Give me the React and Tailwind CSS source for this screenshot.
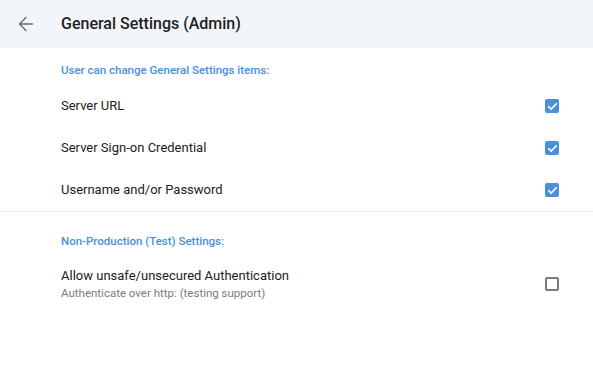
import { ArrowLeft } from "lucide-react";

function Check({ checked }) {
    if (checked) {
        return (
            <div className="w-[14px] h-[14px] rounded-[2px] bg-[#4a8fdc] flex items-center justify-center">
                <svg width="11" height="11" viewBox="0 0 24 24" fill="none" stroke="white" strokeWidth="3.5" strokeLinecap="square">
                    <path d="M4 12.5l5 5L20 6.5" />
                </svg>
            </div>
        );
    }
    return <div className="w-[14px] h-[14px] rounded-[2px] border-2 border-[#7a7a7a]" />;
}

function Row({ label, sub, checked }) {
    return (
        <div className={`flex items-center justify-between pl-[61px] pr-[34px] ${sub ? "pt-[18px]" : "h-[42px]"}`}>
            <div>
                <div className="text-[13px] leading-[18px] text-[#212121]">{label}</div>
                {sub && <div className="text-[11.5px] leading-[16px] text-[#7c7c7c]">{sub}</div>}
            </div>
            <Check checked={checked} />
        </div>
    );
}

export default function App() {
    return (
        <div className="w-[593px] h-[383px] bg-white font-['Roboto',sans-serif]">
            {/* Header */}
            <div className="h-12 bg-[#f2f6fa] flex items-center">
                <div className="w-[61px] pl-[15px]">
                    <ArrowLeft size={22} strokeWidth={1.5} color="#6b6b6b" />
                </div>
                <div className="text-[16px] font-medium text-[#212121]">General Settings (Admin)</div>
            </div>

            <div className="pt-[14px] pl-[61px] text-[11.5px] leading-[16px] font-medium text-[#4a8fdc]">
                User can change General Settings items:
            </div>
            <div className="pt-[7px]">
                <Row label="Server URL" checked />
                <Row label="Server Sign-on Credential" checked />
                <Row label="Username and/or Password" checked />
            </div>
            <div className="border-t border-[#eeeeee]" />

            <div className="pt-[21px] pl-[61px] text-[11.5px] leading-[16px] font-medium text-[#4a8fdc]">
                Non-Production (Test) Settings:
            </div>
            <Row label="Allow unsafe/unsecured Authentication" sub="Authenticate over http: (testing support)" />
        </div>
    );
}
